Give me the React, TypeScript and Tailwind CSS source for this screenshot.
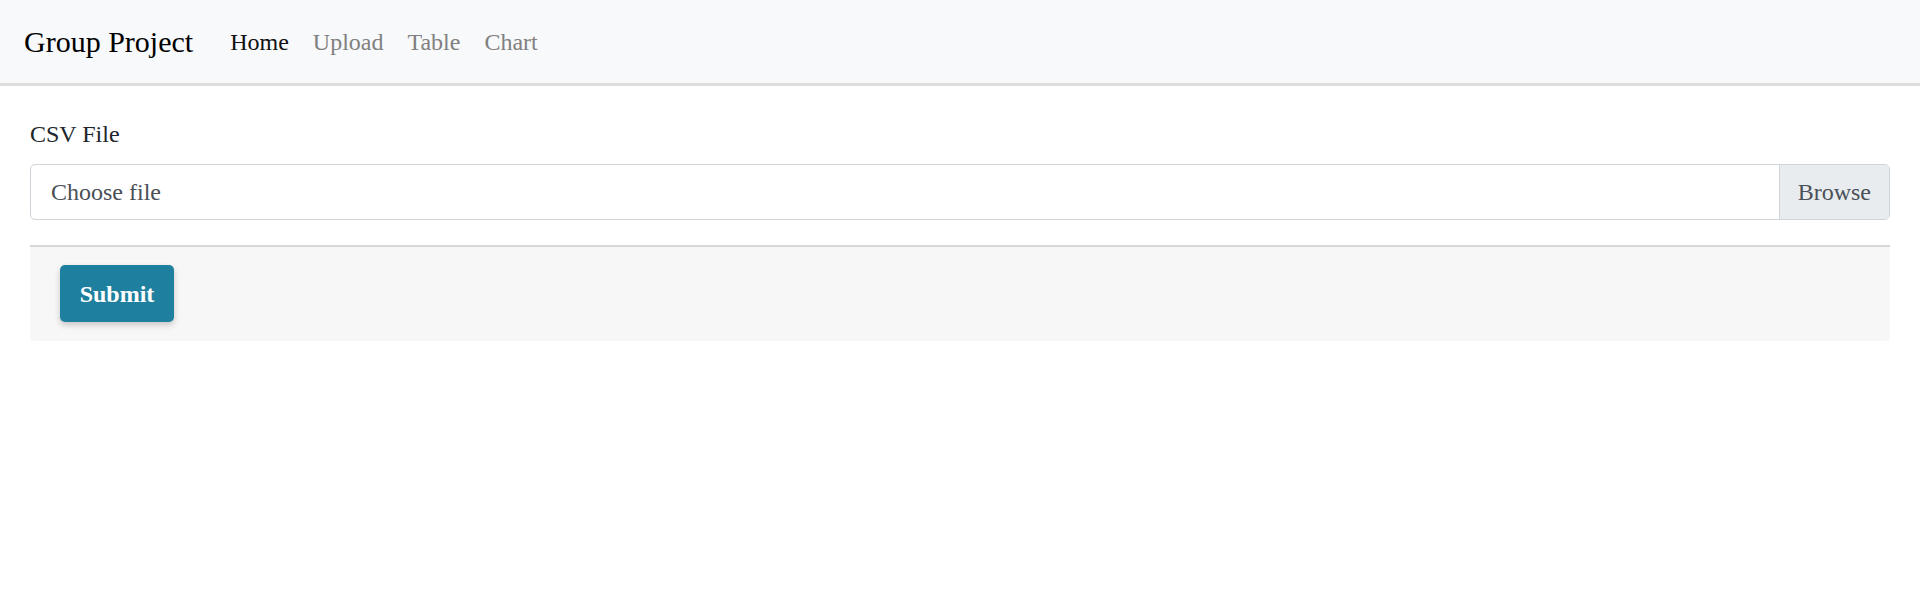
import React from 'react';

const serif = { fontFamily: '"Liberation Serif", "Times New Roman", serif' };

const links = ['Home', 'Upload', 'Table', 'Chart'];

const App: React.FC = () => {
  return (
    <div className="min-h-[600px] bg-white" style={serif}>
      {/* Navbar */}
      <nav className="flex h-[86px] items-center border-b-[3px] border-[#dedede] bg-[#f8f9fa] pl-[24px]">
        <span className="mr-[37px] text-[30px] leading-none text-black">Group Project</span>
        <div className="flex items-center gap-[24px]">
          {links.map((l, i) => (
            <a
              key={l}
              className={`text-[24px] leading-none ${i === 0 ? 'text-[#111]' : 'text-[#808080]'}`}
            >
              {l}
            </a>
          ))}
        </div>
      </nav>

      {/* Upload form */}
      <div className="px-[30px] pt-[30px]">
        <label className="mb-[12px] block h-[36px] text-[24px] leading-[36px] text-[#212529]">CSV File</label>
        <div className="flex h-[56px] overflow-hidden rounded-[5px] border border-[#ced4da] bg-white">
          <div className="flex flex-1 items-center pl-[20px] text-[24px] text-[#495057]">Choose file</div>
          <div className="flex items-center border-l border-[#ced4da] bg-[#e9ecef] px-[18px] text-[24px] text-[#495057]">
            Browse
          </div>
        </div>

        <div className="mt-[25px] rounded-b-[4px] border-t-2 border-[#d6d6d6] bg-[#f7f7f7] px-[30px] pb-[19px] pt-[18px]">
          <button className="h-[57px] w-[114px] rounded-[5px] bg-[#1e7f9e] text-[24px] font-bold text-white shadow-[0_3px_6px_rgba(0,0,0,0.2)]">
            Submit
          </button>
        </div>
      </div>
    </div>
  );
};

export default App;
